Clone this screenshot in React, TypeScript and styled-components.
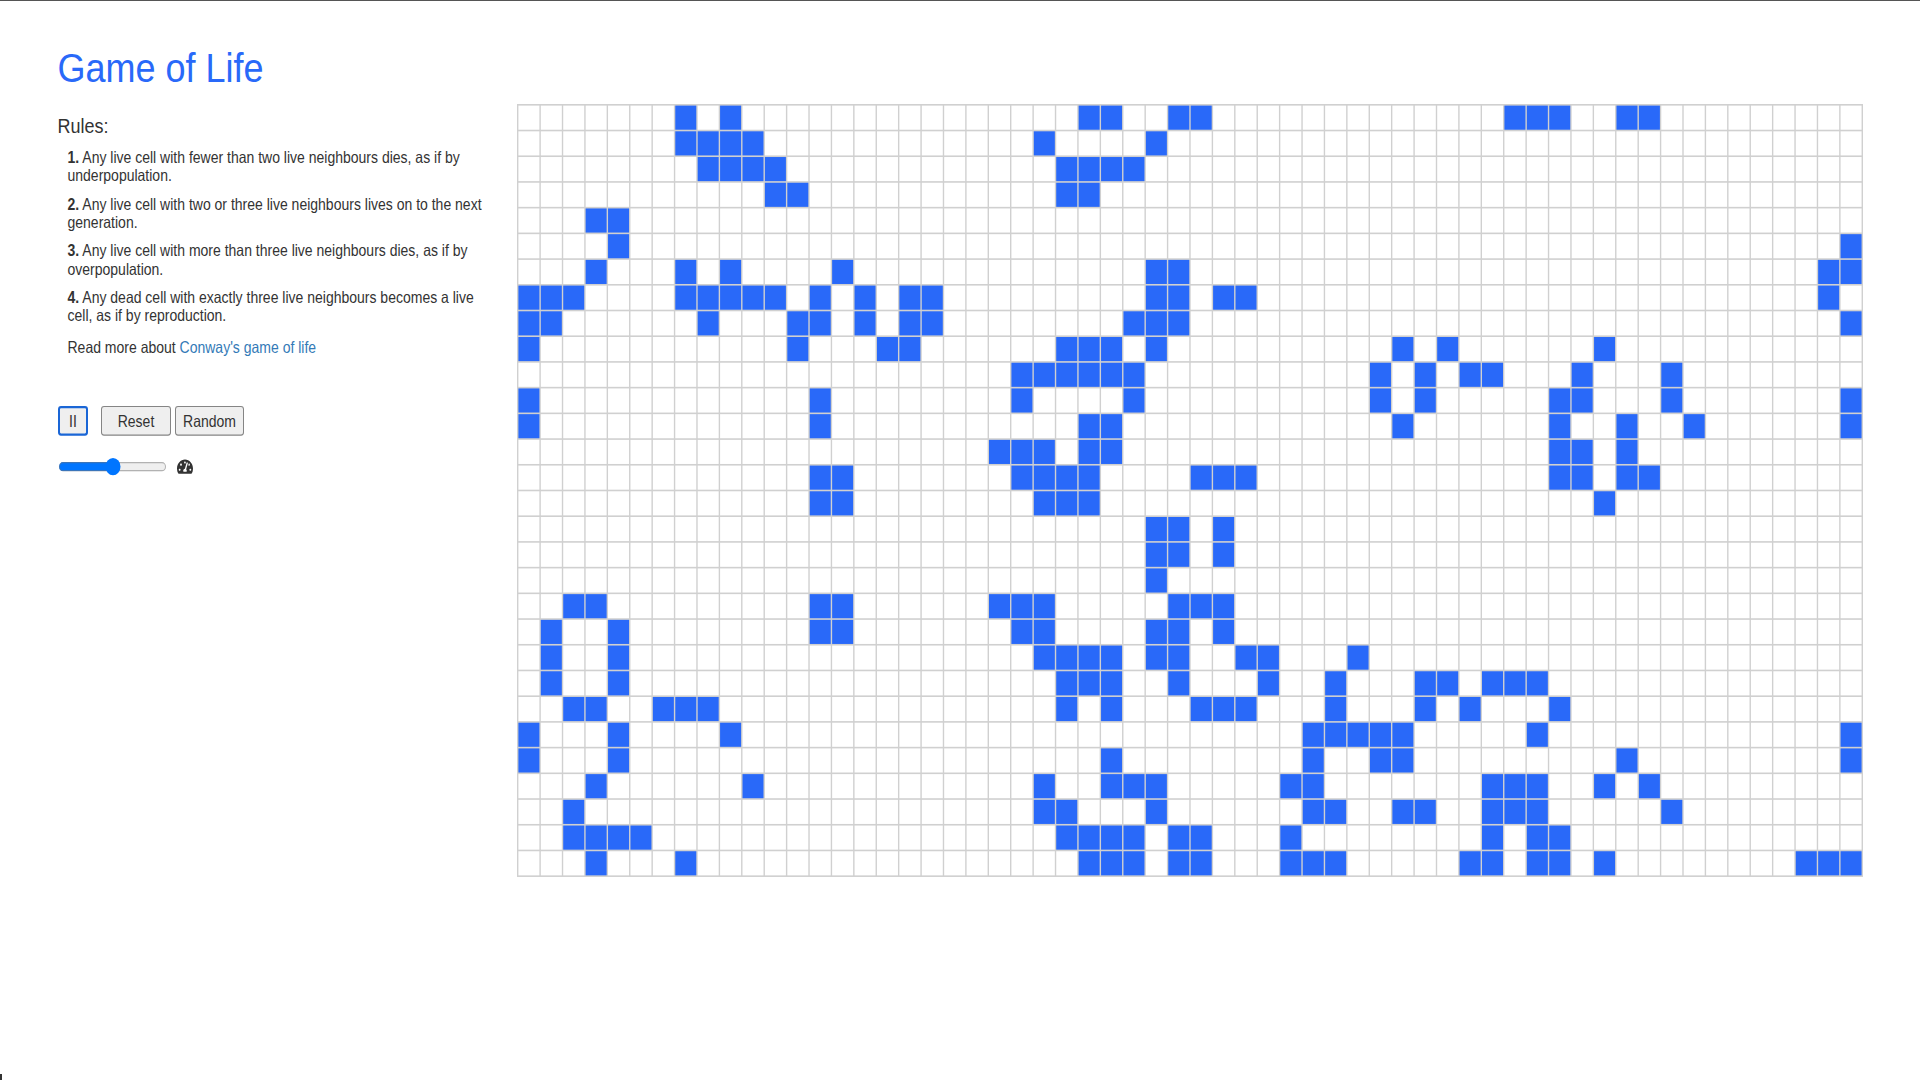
import React from 'react';
import styled, { createGlobalStyle } from 'styled-components';
import { FaTachometerAlt } from 'react-icons/fa';

const COLUMNS = 60;
const ROWS = 30;

// live cells of the board, row -> columns
const LIVE: Record<number, number[]> = {
  0: [7, 9, 25, 26, 29, 30, 44, 45, 46, 49, 50],
  1: [7, 8, 9, 10, 23, 28],
  2: [8, 9, 10, 11, 24, 25, 26, 27],
  3: [11, 12, 24, 25],
  4: [3, 4],
  5: [4, 59],
  6: [3, 7, 9, 14, 28, 29, 58, 59],
  7: [0, 1, 2, 7, 8, 9, 10, 11, 13, 15, 17, 18, 28, 29, 31, 32, 58],
  8: [0, 1, 8, 12, 13, 15, 17, 18, 27, 28, 29, 59],
  9: [0, 12, 16, 17, 24, 25, 26, 28, 39, 41, 48],
  10: [22, 23, 24, 25, 26, 27, 38, 40, 42, 43, 47, 51],
  11: [0, 13, 22, 27, 38, 40, 46, 47, 51, 59],
  12: [0, 13, 25, 26, 39, 46, 49, 52, 59],
  13: [21, 22, 23, 25, 26, 46, 47, 49],
  14: [13, 14, 22, 23, 24, 25, 30, 31, 32, 46, 47, 49, 50],
  15: [13, 14, 23, 24, 25, 48],
  16: [28, 29, 31],
  17: [28, 29, 31],
  18: [28],
  19: [2, 3, 13, 14, 21, 22, 23, 29, 30, 31],
  20: [1, 4, 13, 14, 22, 23, 28, 29, 31],
  21: [1, 4, 23, 24, 25, 26, 28, 29, 32, 33, 37],
  22: [1, 4, 24, 25, 26, 29, 33, 36, 40, 41, 43, 44, 45],
  23: [2, 3, 6, 7, 8, 24, 26, 30, 31, 32, 36, 40, 42, 46],
  24: [0, 4, 9, 35, 36, 37, 38, 39, 45, 59],
  25: [0, 4, 26, 35, 38, 39, 49, 59],
  26: [3, 10, 23, 26, 27, 28, 34, 35, 43, 44, 45, 48, 50],
  27: [2, 23, 24, 28, 35, 36, 39, 40, 43, 44, 45, 51],
  28: [2, 3, 4, 5, 24, 25, 26, 27, 29, 30, 34, 43, 45, 46],
  29: [3, 7, 25, 26, 27, 29, 30, 34, 35, 36, 42, 43, 45, 46, 48, 57, 58, 59],
};

const RULES = [
  'Any live cell with fewer than two live neighbours dies, as if by underpopulation.',
  'Any live cell with two or three live neighbours lives on to the next generation.',
  'Any live cell with more than three live neighbours dies, as if by overpopulation.',
  'Any dead cell with exactly three live neighbours becomes a live cell, as if by reproduction.',
];

const GlobalStyle = createGlobalStyle`
  html, body {
    margin: 0;
    padding: 0;
    background: #fff;
    overflow: hidden;
  }
  body {
    font-family: "Liberation Sans", Arial, sans-serif;
    color: #333;
  }
`;

const Page = styled.div`
  display: flex;
  align-items: flex-start;
  height: 1080px;
  box-sizing: border-box;
  padding-left: 58px;
  border-top: 1px solid #555;
  overflow: hidden;
`;

const Sidebar = styled.aside`
  flex: none;
  width: 459px;
  padding-top: 39px;
  box-sizing: border-box;
  transform: scaleY(1.147);
  transform-origin: 0 0;
`;

const Title = styled.h1`
  margin: 0 0 0 -0.5px;
  color: #2969f9;
  font-size: 36px;
  font-weight: 500;
  line-height: 39.6px;
`;

const RulesHeading = styled.h4`
  margin: 20px 0 9.5px -0.5px;
  font-size: 18px;
  font-weight: 500;
  line-height: 20px;
`;

const RuleText = styled.p`
  width: 420px;
  margin: 8.5px 0 0 9.5px;
  font-size: 14px;
  line-height: 16.1px;
`;

const ReadMore = styled(RuleText)`
  margin-top: 11.6px;
`;

const MoreLink = styled.a`
  color: #337ab7;
  text-decoration: none;
`;

const Controls = styled.div`
  display: flex;
  align-items: center;
  margin-top: 42.6px;
`;

const ControlButton = styled.button<{ $focused?: boolean; $width: number }>`
  width: ${(p) => p.$width}px;
  height: 26px;
  padding: 0;
  margin-right: 4px;
  box-sizing: border-box;
  font-family: inherit;
  font-size: 14px;
  color: #333;
  background: #efefef;
  border: ${(p) => (p.$focused ? '2px solid #1a66d6' : '1px solid #858585')};
  border-radius: 3px;
`;

const PauseButton = styled(ControlButton)`
  margin-right: 13px;
`;

const SpeedRow = styled.div`
  display: flex;
  align-items: center;
  margin-top: 18.9px;
  color: #333;
  font-size: 16px;
`;

const SpeedSlider = styled.input`
  width: 109px;
  height: 16px;
  margin: 0 10px 0 0;
  accent-color: #0075ff;
`;

// laid out on a 16px pitch and stretched, so the lines keep an even width
const Board = styled.div`
  flex: none;
  display: grid;
  grid-template-columns: repeat(${COLUMNS}, 15px);
  grid-template-rows: repeat(${ROWS}, 15px);
  gap: 1px;
  padding: 1px;
  margin-top: 102.8px;
  background: #d0d0d0;
  transform: scale(1.4006, 1.607);
  transform-origin: 0 0;
`;

const Cell = styled.div<{ $alive: boolean }>`
  background: ${(p) => (p.$alive ? '#2969f9' : '#fff')};
`;

const WindowCorner = styled.div`
  position: fixed;
  left: 0;
  bottom: 0;
  width: 2px;
  height: 6px;
  background: #333;
`;

const App = () => {
  const cells: React.ReactNode[] = [];
  for (let row = 0; row < ROWS; row++) {
    for (let col = 0; col < COLUMNS; col++) {
      const alive = (LIVE[row] || []).includes(col);
      cells.push(<Cell key={`${row}-${col}`} $alive={alive} />);
    }
  }

  return (
    <>
      <GlobalStyle />
      <Page>
        <Sidebar>
          <Title>Game of Life</Title>
          <RulesHeading>Rules:</RulesHeading>
          {RULES.map((rule, i) => (
            <RuleText key={rule}>
              <strong>{i + 1}.</strong> {rule}
            </RuleText>
          ))}
          <ReadMore>
            Read more about <MoreLink href="#">Conway's game of life</MoreLink>
          </ReadMore>
          <Controls>
            <PauseButton $focused $width={30}>II</PauseButton>
            <ControlButton $width={70}>Reset</ControlButton>
            <ControlButton $width={69}>Random</ControlButton>
          </Controls>
          <SpeedRow>
            <SpeedSlider type="range" min={0} max={100} defaultValue={50} />
            <FaTachometerAlt />
          </SpeedRow>
        </Sidebar>
        <Board>{cells}</Board>
      </Page>
      <WindowCorner />
    </>
  );
};

export default App;
